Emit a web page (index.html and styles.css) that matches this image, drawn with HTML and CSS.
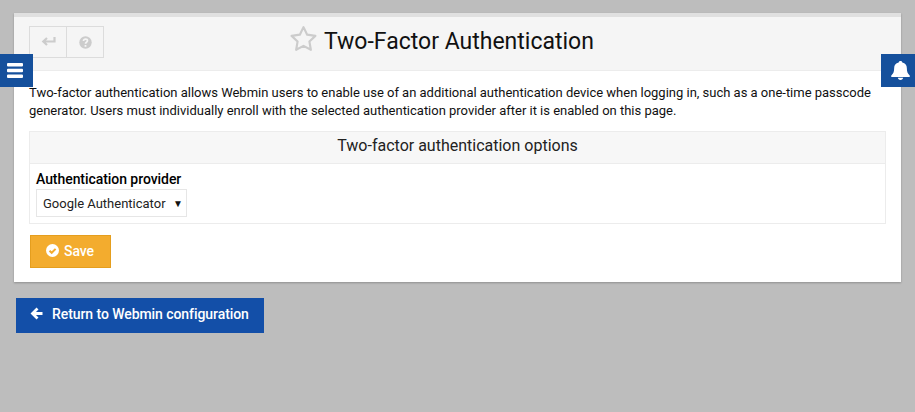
FILE: index.html
```html
<!DOCTYPE html>
<html lang="en">
<head>
<meta charset="utf-8">
<title>Two-Factor Authentication</title>
<link rel="stylesheet" href="styles.css">
</head>
<body>
<button class="side side-left" aria-label="Menu">
  <svg width="18" height="15" viewBox="2 1.500 16 15"><path fill="#fff" d="M3 1.500h14a1 1 0 0 1 1 1v1.500a1 1 0 0 1-1 1H3a1 1 0 0 1-1-1V2.500a1 1 0 0 1 1-1zm0 5.700h14a1 1 0 0 1 1 1v1.600a1 1 0 0 1-1 1H3a1 1 0 0 1-1-1V8.200a1 1 0 0 1 1-1zM3 13h14a1 1 0 0 1 1 1v1.500a1 1 0 0 1-1 1H3a1 1 0 0 1-1-1V14a1 1 0 0 1 1-1z"/></svg>
</button>
<button class="side side-right" aria-label="Notifications">
  <svg width="19" height="19" viewBox="1 1 18 20.300" preserveAspectRatio="none"><path fill="#fff" d="M10 1c1 0 1.700.7 1.700 1.600C14.600 3.300 16 5.600 16 8.500c0 4 .9 6 2.300 7.500.5.500.7 1 .7 1.300 0 .5-.4.700-1 .7H2c-.6 0-1-.2-1-.7 0-.3.2-.8.700-1.300C3.100 14.500 4 12.500 4 8.500c0-2.900 1.400-5.200 4.300-5.900C8.300 1.700 9 1 10 1zM7.500 19h5c0 1.300-1.100 2.300-2.500 2.300S7.500 20.300 7.500 19z"/></svg>
</button>
<main class="panel">
  <header class="head">
    <div class="tools">
      <span class="tool"><svg width="15" height="12" viewBox="0 0 15 12"><path fill="none" stroke="#ccc" stroke-width="2.200" d="M13.500 1v4.500H2.500M6 2 2.300 5.500 6 9"/></svg></span>
      <span class="tool"><svg width="13" height="13" viewBox="0 0 13 13"><circle cx="6.500" cy="6.500" r="6.200" fill="#ccc"/><path fill="none" stroke="#f5f5f5" stroke-width="1.700" d="M4.500 5c0-1.200.9-1.800 2-1.800s2 .6 2 1.600c0 1.500-2 1.300-2 2.900"/><rect x="5.600" y="9" width="1.800" height="1.800" fill="#f5f5f5"/></svg></span>
    </div>
    <h1 class="title">
      <svg class="star" width="27" height="26" viewBox="1 1.500 25 24"><path fill="none" stroke="#ccc" stroke-width="2" stroke-linejoin="round" d="M13.500 2.500l3.400 7 7.600 1.100-5.500 5.300 1.300 7.600-6.800-3.600-6.800 3.600 1.300-7.600-5.500-5.300 7.600-1.100z"/></svg>
      <span>Two-Factor Authentication</span>
    </h1>
  </header>
  <div class="body">
    <p class="intro">Two-factor authentication allows Webmin users to enable use of an additional authentication device when logging in, such as a one-time passcode generator. Users must individually enroll with the selected authentication provider after it is enabled on this page.</p>
    <section class="box">
      <h2 class="box-title">Two-factor authentication options</h2>
      <div class="box-body">
        <label class="field-label">Authentication provider</label>
        <div class="select"><span>Google Authenticator</span><i class="caret">▼</i></div>
      </div>
    </section>
    <button class="save">
      <svg width="13" height="13" viewBox="0 0 13 13"><circle cx="6.500" cy="6.500" r="6.500" fill="#fff"/><path fill="none" stroke="#f3ac2e" stroke-width="2" d="M3.500 6.700l2.200 2.100 3.900-3.900"/></svg>
      Save
    </button>
  </div>
</main>
<a class="return">
  <svg width="13" height="13" viewBox="0 0 13 13"><path fill="none" stroke="#fff" stroke-width="2.800" d="M12.500 6.500H3M7.500 1.500 2.500 6.500l5 5"/></svg>
  Return to Webmin configuration
</a>
</body>
</html>
```
FILE: styles.css
```css
* { box-sizing: border-box; }
html, body { height: 100%; }
body {
  margin: 0;
  padding: 13px 14px 0;
  background: #bdbdbd;
  font-family: Roboto, "Liberation Sans", sans-serif;
  font-size: 13px;
  color: #111;
  overflow: hidden;
}
.panel {
  width: 887px;
  height: 269px;
  background: #fff;
  border-top: 4px solid #e0e0e0;
  box-shadow: 0 1px 2px rgba(0,0,0,.25);
}
.head {
  position: relative;
  height: 54px;
  background: #f5f5f5;
  border-bottom: 1px solid #ececec;
  padding: 9px 0 0 15px;
}
.tools { display: flex; width: 75px; height: 32px; border: 1px solid #dcdcdc; }
.tool { flex: 1; display: flex; align-items: center; justify-content: center; }
.tool + .tool { border-left: 1px solid #dcdcdc; }
.title {
  position: absolute;
  left: 276px;
  top: 11px;
  margin: 0;
  display: flex;
  align-items: center;
  gap: 7px;
  font-size: 23px;
  font-weight: 400;
  line-height: 28px;
  color: #111;
  white-space: nowrap;
}
.star { display: block; margin-top: -6px; }
.body { padding: 13px 15px 0 15px; }
.intro { margin: 0; line-height: 18px; font-size: 13px; letter-spacing: -0.01px; }
.box { margin-top: 11px; width: 857px; height: 93px; border: 1px solid #ececec; }
.box-title {
  margin: 0;
  height: 32px;
  background: #f7f7f7;
  border-bottom: 1px solid #ececec;
  text-align: center;
  font-size: 16px;
  font-weight: 400;
  line-height: 27px;
  color: #222;
}
.box-body { padding: 7px 6px 0; }
.field-label { display: block; font-weight: 500; font-size: 14px; line-height: 17px; letter-spacing: -0.06px; color: #000; }
.select {
  margin-top: 1px;
  width: 151px;
  height: 28px;
  padding: 0 3px 0 6px;
  display: flex;
  align-items: center;
  justify-content: space-between;
  border: 1px solid #e6e6e6;
  background: #fff;
  font-size: 13px;
  color: #222;
}
.caret { font-style: normal; font-size: 10px; color: #111; }
.save {
  margin: 11px 0 0 1px;
  width: 81px;
  height: 33px;
  display: flex;
  align-items: center;
  gap: 5px;
  padding: 0 0 2px 15px;
  background: #f3ac2e;
  border: 1px solid #e59e1e;
  color: #fff;
  font: 500 14px Roboto, "Liberation Sans", sans-serif;
  letter-spacing: -0.1px;
}
.return {
  margin: 16px 0 0 2px;
  width: 248px;
  height: 35px;
  display: flex;
  align-items: center;
  gap: 9px;
  padding: 0 0 4px 14px;
  background: #134fa8;
  color: #fff;
  font-weight: 500;
  font-size: 14px;
  letter-spacing: -0.07px;
  white-space: nowrap;
}
.side {
  position: absolute;
  z-index: 2;
  top: 54px;
  width: 33px;
  height: 33px;
  padding: 0 3px 0 0;
  border: 0;
  background: #15509c;
  display: flex;
  align-items: center;
  justify-content: center;
}
.side-left { left: 0; }
.side-right { right: 0; width: 34px; padding: 0 0 0 4px; }
```
